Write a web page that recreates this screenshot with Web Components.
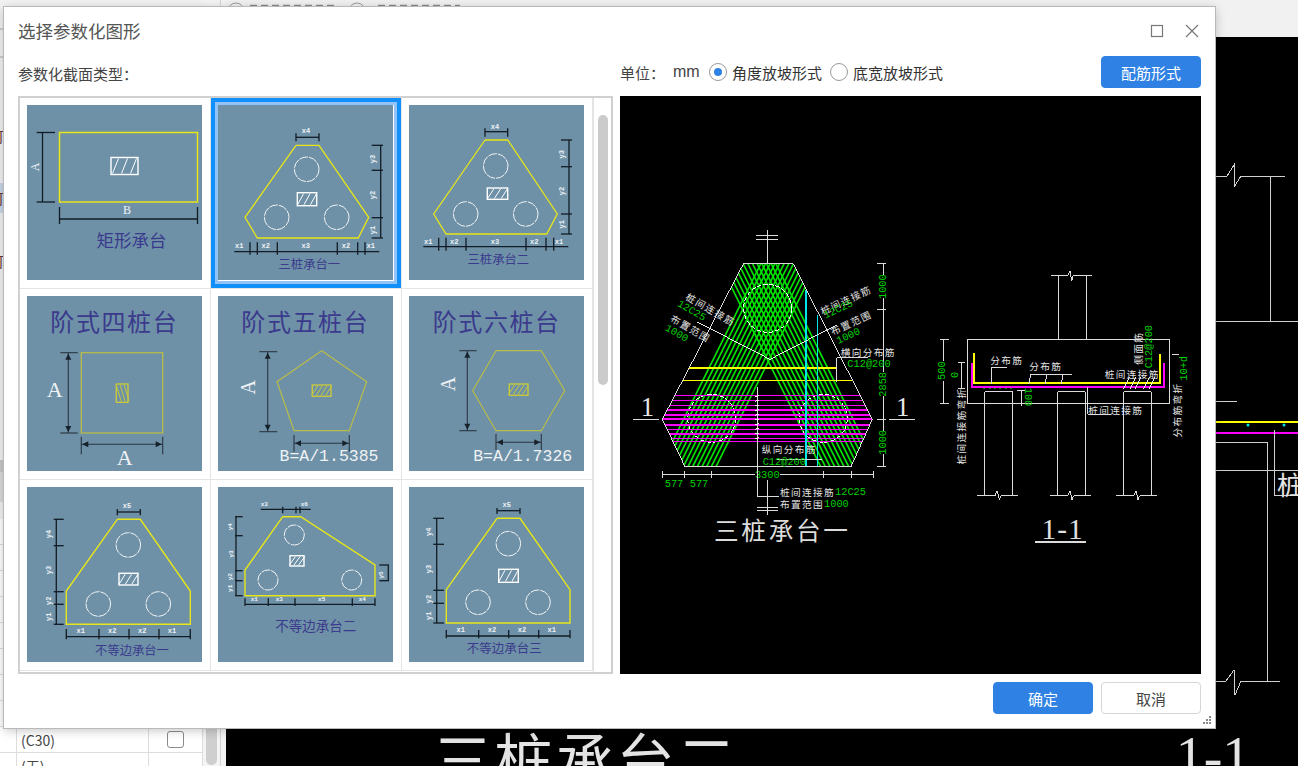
<!DOCTYPE html>
<html lang="zh">
<head>
<meta charset="utf-8">
<title>选择参数化图形</title>
<style>
  html, body { margin: 0; height: 100%; overflow: hidden; background: #f0f0f0; }
  body { font-family: "Noto Sans CJK SC", "Liberation Sans", sans-serif; color: #333; }
</style>
</head>
<body>
<app-backdrop>
  <param-dialog heading="选择参数化图形"></param-dialog>
</app-backdrop>

<script>
// shared svg helpers
const CJK = '"Noto Sans CJK SC", "Liberation Sans", sans-serif';
const MONO = '"Liberation Mono", monospace';
const SERIF = '"Liberation Serif", serif';

function line(x1, y1, x2, y2, stroke, w = 1) {
  return `<line x1="${x1}" y1="${y1}" x2="${x2}" y2="${y2}" stroke="${stroke}" stroke-width="${w}"/>`;
}
function poly(pts, stroke, w = 1, fill = 'none') {
  return `<polyline points="${pts.map(p => p.join(',')).join(' ')}" stroke="${stroke}" stroke-width="${w}" fill="${fill}"/>`;
}
function label(x, y, s, o = {}) {
  const { size = 7, fill = '#eef2f4', rot = 0, family = MONO, weight = 'normal', anchor = 'middle', spacing = 0 } = o;
  const tr = rot ? ` transform="rotate(${rot} ${x} ${y})"` : '';
  return `<text x="${x}" y="${y}" font-size="${size}" fill="${fill}" font-family='${family}' font-weight="${weight}" text-anchor="${anchor}" dominant-baseline="central" letter-spacing="${spacing}"${tr}>${s}</text>`;
}
// dimension names inside the thumbnails
function dl(x, y, s, o = {}) {
  return label(x, y, s, { weight: 'bold', ...o });
}

// thumbnails: coordinates are px inside the 175x175 picture
const DARK = '#111c24';
const YEL = '#e6e618';
const OLIVE = '#b8bc48';
const INK = '#3b3a8c';

function dimH(y, ticks, t0, t1, from, to, c = DARK) {
  const a = from ?? ticks[0], b = to ?? ticks[ticks.length - 1];
  return line(a, y, b, y, c, 1.3) + ticks.map(x => line(x, t0, x, t1, c, 1.3)).join('');
}
function dimV(x, ticks, t0, t1, c = DARK) {
  return line(x, ticks[0], x, ticks[ticks.length - 1], c, 1.3) + ticks.map(y => line(t0, y, t1, y, c, 1.3)).join('');
}
function hatch(x, y, w, h, c = '#fff', n = 3, flip = false) {
  let out = `<rect x="${x}" y="${y}" width="${w}" height="${h}" fill="none" stroke="${c}" stroke-width="1.4"/>`;
  for (let i = 0; i < n; i++) {
    const px = x + (w / n) * (i + 0.5);
    out += flip
      ? line(px - 2, y + 1, px + 3, y + h - 1, c, 1)
      : line(px + 3, y + 1, px - 3, y + h - 1, c, 1);
  }
  return out;
}
function piles(list, r = 12.3) {
  return list.map(([x, y]) =>
    `<circle cx="${x}" cy="${y}" r="${r}" fill="none" stroke="#f2f4f5" stroke-width="1" stroke-dasharray="9 1"/>`).join('');
}
function arrowV(x, y1, y2, t0, t1) {
  const c = '#2a3640';
  return line(x, y1, x, y2, c, 1.1) + line(t0, y1, t1, y1, c, 1.1) + line(t0, y2, t1, y2, c, 1.1) +
    `<path d="M${x} ${y1 + 1}l-3 6h6zM${x} ${y2 - 1}l-3 -6h6z" fill="#17212a"/>`;
}
function arrowH(y, x1, x2, t0, t1) {
  const c = '#2a3640';
  return line(x1, y, x2, y, c, 1.1) + line(x1, t0, x1, t1, c, 1.1) + line(x2, t0, x2, t1, c, 1.1) +
    `<path d="M${x1 + 1} ${y}l6 -3v6zM${x2 - 1} ${y}l-6 -3v6z" fill="#17212a"/>`;
}
const closed = pts => pts.concat([pts[0]]);

const THUMBS = {
  rect: () =>
    `<rect x="32.5" y="27.5" width="138" height="69.5" fill="none" stroke="${YEL}" stroke-width="1.5"/>` +
    hatch(84, 52.5, 27, 17) +
    dimV(15.5, [27.5, 97], 9.7, 28) +
    label(7.5, 62, 'A', { size: 12, rot: -90, family: SERIF }) +
    dimH(114, [32.5, 170.5], 102, 119) +
    label(100, 105, 'B', { size: 12, family: SERIF }) +
    label(104.5, 134, '矩形承台', { size: 17.5, fill: INK, family: CJK }),

  tri1: () =>
    poly(closed([[78, 40.3], [101, 40.3], [150.7, 112.3], [140.3, 133], [39.3, 133], [27, 112.3]]), YEL, 1.3) +
    piles([[88.7, 64.3], [58.7, 112.3], [118.7, 112.3]]) +
    hatch(79.3, 87.7, 19.4, 13) +
    dimH(32.3, [78, 101], 28.3, 36.3) + dl(88, 25.7, 'x4') +
    dimV(162.7, [40.3, 65.3, 112.7, 133], 153.7, 165) +
    dl(154.7, 54, 'y3', { rot: -90 }) + dl(154.7, 90, 'y2', { rot: -90 }) + dl(154.7, 125, 'y1', { rot: -90 }) +
    dimH(146.7, [32, 39.3, 59.3, 119.3, 139.7, 147], 137.3, 149.7, 16.3, 161.3) +
    dl(21.3, 141, 'x1') + dl(47.7, 141, 'x2') + dl(87.7, 141, 'x3') + dl(128, 141, 'x2') + dl(152.7, 141, 'x1') +
    label(91.3, 158.8, '三桩承台一', { size: 12.3, fill: INK, family: CJK }),

  tri2: () =>
    poly(closed([[76, 35], [98.7, 35], [148.3, 109], [137.7, 129], [37, 129], [24.7, 109]]), YEL, 1.3) +
    piles([[86.7, 61], [56.7, 109], [116.7, 109]]) +
    hatch(78.3, 83, 20.4, 11.3) +
    dimH(26.7, [76, 98.7], 23.3, 31.7) + dl(86, 22, 'x4') +
    dimV(160, [35, 61.7, 109, 129], 152, 163) +
    dl(152.7, 49.3, 'y3', { rot: -90 }) + dl(152.7, 86, 'y2', { rot: -90 }) + dl(152.7, 119.3, 'y1', { rot: -90 }) +
    dimH(141.7, [29.7, 37, 57, 117, 137, 144.7], 132.7, 145.7, 14.3, 159.3) +
    dl(19.3, 137, 'x1') + dl(45.3, 137, 'x2') + dl(86, 137, 'x3') + dl(125.3, 137, 'x2') + dl(150, 137, 'x1') +
    label(89.3, 153.8, '三桩承台二', { size: 12.3, fill: INK, family: CJK }),

  step4: () =>
    label(87.3, 24.8, '阶式四桩台', { size: 24, fill: INK, family: CJK, spacing: 1.6 }) +
    `<rect x="54.3" y="56.7" width="81.4" height="80.3" fill="none" stroke="${OLIVE}" stroke-width="1.3"/>` +
    hatch(89.3, 88, 11.7, 18.3, '#c8c83c', 3, true) +
    arrowV(41.3, 56.7, 137, 33.3, 50.7) +
    label(27.7, 93.3, 'A', { size: 22, family: SERIF }) +
    arrowH(148.3, 54.3, 135.7, 140.7, 158.3) +
    label(97.7, 161.5, 'A', { size: 22, family: SERIF }),

  step5: () =>
    label(87.3, 24.8, '阶式五桩台', { size: 24, fill: INK, family: CJK, spacing: 1.6 }) +
    poly(closed([[103.7, 54.7], [148.7, 85.7], [131.3, 134.7], [76, 134.7], [59, 85.7]]), OLIVE, 1.2) +
    hatch(94.3, 89, 18.7, 11.3, '#c8c83c', 4) +
    arrowV(49.7, 55.7, 135.7, 41.3, 59.3) +
    label(30.3, 91.3, 'A', { size: 20, rot: -90, family: SERIF }) +
    arrowH(147.3, 76, 131.3, 139, 155.7) +
    label(111, 160.7, 'B=A/1.5385', { size: 16.5 }),

  step6: () =>
    label(87.7, 24.8, '阶式六桩台', { size: 24, fill: INK, family: CJK, spacing: 1.6 }) +
    poly(closed([[87, 54.7], [132.3, 54.7], [155.7, 94.7], [132.3, 134.7], [87, 134.7], [63.7, 94.7]]), OLIVE, 1.2) +
    hatch(100.3, 88, 18.7, 11.3, '#c8c83c', 4) +
    arrowV(58.3, 54.7, 134.7, 50.3, 67.7) +
    label(39.3, 88, 'A', { size: 20, rot: -90, family: SERIF }) +
    arrowH(146.3, 87, 132.3, 138, 154) +
    label(113.7, 160.7, 'B=A/1.7326', { size: 16.5 }),

  uneq1: () =>
    poly(closed([[90.3, 32.3], [113.3, 32.3], [163.3, 104], [163.3, 137.3], [39.3, 137.3], [39.3, 104]]), YEL, 1.4) +
    piles([[101.3, 58], [71.3, 117], [131.3, 117]]) +
    hatch(92, 86.3, 19, 11.7) +
    dimH(25, [90.3, 113.3], 22, 28.3) + dl(100, 19, 'x5') +
    dimV(29.3, [32.3, 58.7, 104.7, 117.3, 137.3], 26.7, 36.7) +
    dl(22, 47, 'y4', { rot: -90 }) + dl(22, 83, 'y3', { rot: -90 }) + dl(22, 113.7, 'y2', { rot: -90 }) + dl(22, 129.7, 'y1', { rot: -90 }) +
    dimH(149.7, [39.3, 72, 102, 132, 163.3], 142, 152.3) +
    dl(53.7, 144, 'x1') + dl(85.3, 144, 'x2') + dl(115.3, 144, 'x2') + dl(145, 144, 'x1') +
    label(105, 162.5, '不等边承台一', { size: 12.3, fill: INK, family: CJK }),

  uneq2: () =>
    poly(closed([[64.7, 29.7], [82.7, 29.7], [157, 78], [157, 108.7], [27, 108.7], [27, 83]]), YEL, 1.4) +
    piles([[76.3, 48], [50, 93], [133.7, 93]], 10) +
    hatch(72, 68.7, 14, 10.3) +
    dimH(22.3, [64.7, 78, 82], 19.7, 26.3, 42.7, 92.7) + dl(46.3, 17, 'x3', { size: 6 }) + dl(86.3, 17, 'x6', { size: 6 }) +
    dimV(18, [29.7, 48.7, 83.7, 93.7, 108.7], 17, 24.7) +
    dl(13, 39.7, 'y4', { size: 6, rot: -90 }) + dl(13, 67, 'y3', { size: 6, rot: -90 }) + dl(13, 89.7, 'y2', { size: 6, rot: -90 }) + dl(13, 101.3, 'y1', { size: 6, rot: -90 }) +
    dimV(170.3, [78, 93.7], 161.3, 171) + dl(163.7, 88, 'y5', { size: 6, rot: -90 }) +
    dimH(117.3, [27, 50.3, 77, 134.3, 157], 111.3, 119) +
    dl(36.3, 112.3, 'x1', { size: 6 }) + dl(61.3, 112.3, 'x3', { size: 6 }) + dl(103.7, 112.3, 'x5', { size: 6 }) + dl(144.3, 112.3, 'x4', { size: 6 }) +
    label(97.7, 138, '不等边承台二', { size: 13.5, fill: INK, family: CJK }),

  uneq3: () =>
    poly(closed([[88, 31.3], [111, 31.3], [161, 102.7], [161, 136], [37.3, 136], [37.3, 102.7]]), YEL, 1.4) +
    piles([[99.3, 56.7], [69, 115.3], [129, 115.3]]) +
    hatch(89.7, 82.3, 19.6, 13) +
    dimH(23.7, [88, 111], 21, 27) + dl(97.7, 18, 'x5') +
    dimV(27.7, [31.3, 57.3, 103.3, 116.3, 136], 24.3, 35) +
    dl(20, 44.7, 'y4', { rot: -90 }) + dl(20, 82, 'y3', { rot: -90 }) + dl(20, 112, 'y2', { rot: -90 }) + dl(20, 128.7, 'y1', { rot: -90 }) +
    dimH(149, [37.3, 69.7, 99.7, 129.7, 161], 143, 151.3) +
    dl(51.7, 143, 'x1') + dl(83, 143, 'x2') + dl(113, 143, 'x2') + dl(142.7, 143, 'x1') +
    label(95.3, 160.8, '不等边承台三', { size: 12.5, fill: INK, family: CJK }),
};

class CadThumb extends HTMLElement {
  connectedCallback() {
    const root = this.shadowRoot || this.attachShadow({ mode: 'open' });
    const kind = this.getAttribute('kind');
    root.innerHTML = `
      <style>
        :host { display: block; width: 175px; height: 175px; background: #6e91a8; }
        svg { display: block; }
      </style>
      <svg width="175" height="175" viewBox="0 0 175 175">${THUMBS[kind]()}</svg>
    `;
  }
}
customElements.define('cad-thumb', CadThumb);

class ThumbGrid extends HTMLElement {
  constructor() {
    super();
    this.attachShadow({ mode: 'open' });
    const kinds = ['rect', 'tri1', 'tri2', 'step4', 'step5', 'step6', 'uneq1', 'uneq2', 'uneq3'];
    this.shadowRoot.innerHTML = `
      <style>
        :host {
          display: flex;
          width: 595px;
          height: 578px;
          box-sizing: border-box;
          border: 2px solid #d0d0d0;
          background: #fff;
        }
        .cells {
          display: grid;
          grid-template-columns: repeat(3, 191px);
          grid-auto-rows: 191px;
        }
        .cell {
          box-sizing: border-box;
          padding: 7px 0 0 7px;
          border-right: 1px solid #e4e4e4;
          border-bottom: 1px solid #e4e4e4;
        }
        .cell.selected {
          box-shadow: inset 0 0 0 4px #1190fb, inset 0 0 0 7px #92c3f6;
        }
        .track {
          flex: 1;
          display: flex;
          justify-content: center;
          padding-top: 17px;
          border-left: 1px solid #e4e4e4;
        }
        .bar { width: 10px; height: 270px; border-radius: 5px; background: #cbcbcb; }
      </style>
      <div class="cells">
        ${kinds.map(k => `<div class="cell${k === 'tri1' ? ' selected' : ''}"><cad-thumb kind="${k}"></cad-thumb></div>`).join('')}
      </div>
      <div class="track"><div class="bar"></div></div>
    `;
  }
}
customElements.define('thumb-grid', ThumbGrid);

// the big preview: both groups keep the coords read off the 3x crops
function planDrawing() {
  const outline = [[370, 132], [520, 132], [757, 598], [693, 740], [195, 740], [127, 598]];
  let bars = '';
  for (let i = 0; i <= 170; i += 14) {
    bars += line(120 + i, 740, 422 + i, 132, '#00e400', 5);
    bars += line(770 - i, 740, 468 - i, 132, '#00e400', 5);
  }
  let mag = '';
  [527, 542, 557, 570, 585, 597, 615, 628, 642, 655, 665].forEach(y => { mag += line(120, y, 770, y, '#ff00ff', 4); });
  let ticks = '';
  for (let y = 530; y <= 665; y += 14) ticks += line(404, y, 418, y - 3, '#eee', 3);
  const W = '#dcdcdc', G = '#00d000';
  const cn = { size: 29, fill: '#e4e4e4', family: CJK, spacing: 4 };
  const gr = { size: 31, fill: G, family: MONO };
  return `
    <defs><clipPath id="hexclip"><polygon points="${outline.map(p => p.join(',')).join(' ')}"/></clipPath></defs>
    <g clip-path="url(#hexclip)" shape-rendering="geometricPrecision">${bars}</g>
    ${piles([[443, 265], [275, 595], [610, 595]], 72).replace(/stroke-width="1"/g, 'stroke-width="3"').replace(/9 1/g, '14 5')}
    <g clip-path="url(#hexclip)">${mag}</g>
    ${line(207, 444, 650, 444, '#ffff00', 4)}${line(190, 482, 697, 482, '#ffff00', 4)}
    ${line(558, 210, 558, 740, '#00e6e6', 4)}${line(593, 285, 593, 740, '#00e6e6', 4)}
    ${poly(closed(outline), W, 3)}
    ${poly([[230, 305], [450, 418], [650, 315]], '#e8e8e8', 3)}
    ${line(443, 30, 443, 132, W, 3)}${line(408, 48, 475, 48, W, 3)}${line(408, 58, 475, 58, W, 3)}
    ${line(443, 780, 443, 885, W, 3)}${line(412, 862, 475, 862, W, 3)}${line(412, 872, 475, 872, W, 3)}
    ${line(40, 598, 118, 598, W, 3)}${line(808, 598, 885, 598, W, 3)}
    ${label(82, 562, '1', { size: 80, fill: '#e8e8e8', family: SERIF })}
    ${label(848, 562, '1', { size: 80, fill: '#e8e8e8', family: SERIF })}
    ${line(790, 132, 790, 740, W, 3)}
    ${[132, 268, 598, 740].map(y => line(772, y, 797, y, W, 3)).join('')}
    <rect x="775" y="165" width="30" height="70" fill="#000"/>
    <rect x="775" y="457" width="30" height="72" fill="#000"/>
    <rect x="775" y="632" width="30" height="70" fill="#000"/>
    ${label(789, 200, '1000', { ...gr, rot: -90 })}${label(789, 493, '2858', { ...gr, rot: -90 })}${label(789, 667, '1000', { ...gr, rot: -90 })}
    ${line(127, 763, 762, 763, W, 3)}
    ${[127, 195, 275, 612, 695, 762].map(x => line(x, 752, x, 775, W, 3)).join('')}
    <rect x="405" y="752" width="76" height="26" fill="#000"/>
    ${label(442, 766, '3300', gr)}${label(162, 792, '577', gr)}${label(237, 792, '577', gr)}
    ${label(272, 268, '桩间连接筋', { ...cn, rot: 30 })}
    ${label(215, 272, '12C25', { ...gr, rot: 30 })}
    ${label(212, 325, '布置范围', { ...cn, rot: 30 })}
    ${label(170, 340, '1000', { ...gr, rot: 30 })}
    ${label(678, 240, '桩间连接筋', { ...cn, rot: -25 })}
    ${label(655, 268, '12C25', { ...gr, rot: -25 })}
    ${label(693, 308, '布置范围', { ...cn, rot: -25 })}
    ${label(685, 348, '1000', { ...gr, rot: -25 })}
    ${poly([[745, 414], [650, 414], [650, 485]], W, 3)}
    ${label(745, 396, '横向分布筋', cn)}${label(747, 432, 'C12@200', gr)}
    ${line(413, 502, 413, 830, W, 3)}${line(413, 830, 478, 830, W, 3)}${ticks}
    ${line(470, 718, 605, 718, W, 3)}
    ${label(508, 688, '纵向分布筋', cn)}${label(493, 726, 'C12@200', gr)}
    ${label(480, 815, '桩间连接筋', { ...cn, anchor: 'start' })}${label(645, 815, '12C25', { ...gr, anchor: 'start' })}
    ${label(480, 852, '布置范围', { ...cn, anchor: 'start' })}${label(612, 852, '1000', { ...gr, anchor: 'start' })}
    ${label(487, 928, '三桩承台一', { size: 74, fill: '#dcdcdc', family: CJK, spacing: 8 })}
  `;
}

function pileLeg(x) {
  const W = '#dcdcdc';
  return poly([[x, 707], [x, 395], [x + 83, 395], [x + 83, 707]], W, 3) +
    poly([[x - 23, 707], [x + 30, 707], [x + 37, 692], [x + 43, 720], [x + 48, 707], [x + 100, 707]], W, 3);
}

function sectionDrawing() {
  const W = '#dcdcdc', G = '#00d000';
  const cn = { size: 29, fill: '#e4e4e4', family: CJK, spacing: 4 };
  const gr = { size: 31, fill: G, family: MONO };
  let ties = '';
  [620, 640, 655, 680, 697].forEach(x => { ties += line(x - 10, 388, x + 8, 352, '#eee', 3); });
  let dots = '';
  for (let x = 190; x < 280; x += 16) dots += line(x, 385, x + 6, 385, '#00d000', 2);
  return `
    ${line(417, 46, 417, 238, W, 3)}${line(500, 46, 500, 238, W, 3)}
    ${poly([[393, 46], [443, 46], [450, 32], [455, 62], [460, 46], [516, 46]], W, 3)}
    <rect x="143" y="238" width="605" height="194" fill="none" stroke="${W}" stroke-width="3"/>
    ${pileLeg(195)}${pileLeg(413)}${pileLeg(611)}
    ${poly([[156, 308], [156, 381], [731, 381], [731, 308]], '#ff00ff', 6)}
    ${poly([[163, 278], [163, 368], [720, 368], [720, 282]], '#ffff00', 6)}
    ${dots}${ties}
    ${line(70, 238, 70, 432, W, 3)}${line(60, 238, 88, 238, W, 3)}${line(60, 432, 88, 432, W, 3)}
    <rect x="52" y="302" width="32" height="62" fill="#000"/>
    ${label(66, 332, '500', { ...gr, rot: -90 })}${label(105, 345, '0', { ...gr, rot: -90 })}
    ${line(125, 308, 125, 385, W, 3)}${line(115, 308, 135, 308, W, 3)}${line(115, 385, 135, 385, W, 3)}
    ${label(122, 498, '桩间连接筋弯折', { ...cn, rot: -90 })}
    ${poly([[260, 322], [215, 322], [215, 372]], W, 3)}${label(260, 300, '分布筋', cn)}
    ${line(333, 343, 455, 343, W, 3)}${line(333, 343, 326, 372, W, 3)}${line(380, 345, 375, 372, W, 3)}${line(429, 345, 424, 372, W, 3)}
    ${label(377, 318, '分布筋', cn)}
    ${line(306, 393, 306, 437, W, 3)}${line(290, 393, 314, 393, W, 3)}
    ${label(325, 411, '100', { ...gr, rot: 90 })}
    ${label(637, 341, '桩间连接筋', cn)}
    ${poly([[503, 380], [503, 463], [572, 463]], W, 3)}
    ${label(587, 450, '桩间连接筋', cn)}
    ${label(655, 265, '侧面筋', { ...cn, rot: -90 })}
    ${label(686, 260, 'C12@200', { ...gr, rot: -90 })}
    ${label(792, 325, '10+d', { ...gr, rot: -90 })}
    ${line(755, 283, 778, 283, W, 3)}
    ${label(770, 450, '分布筋弯折', { ...cn, rot: -90 })}
    ${label(428, 806, '1-1', { size: 88, fill: '#e0e0e0', family: SERIF, spacing: 3 })}
    ${line(345, 846, 497, 846, W, 4)}
  `;
}

class CadPreview extends HTMLElement {
  constructor() {
    super();
    this.attachShadow({ mode: 'open' });
    this.shadowRoot.innerHTML = `
      <style>
        :host { display: block; width: 581px; height: 578px; background: #000; }
        svg { display: block; shape-rendering: crispEdges; }
      </style>
      <svg width="581" height="578" viewBox="620 96 581 578">
        <g transform="translate(620 220) scale(.33333)">${planDrawing()}</g>
        <g transform="translate(920 260) scale(.33333)">${sectionDrawing()}</g>
      </svg>
    `;
  }
}
customElements.define('cad-preview', CadPreview);

class UiButton extends HTMLElement {
  constructor() {
    super();
    this.attachShadow({ mode: 'open' });
    this.shadowRoot.innerHTML = `
      <style>
        :host {
          display: flex;
          align-items: center;
          justify-content: center;
          width: 100px;
          height: 32px;
          box-sizing: border-box;
          border-radius: 4px;
          border: 1px solid #d6d6d6;
          background: #fff;
          color: #444;
          font-size: 15px;
        }
        :host([primary]) { background: #2f82e4; border-color: #2f82e4; color: #fff; }
      </style>
      <slot></slot>
    `;
  }
}
customElements.define('ui-button', UiButton);

class UiRadio extends HTMLElement {
  constructor() {
    super();
    this.attachShadow({ mode: 'open' });
    this.shadowRoot.innerHTML = `
      <style>
        :host { display: inline-flex; align-items: center; gap: 5px; font-size: 15px; color: #333; }
        .ring {
          width: 18px;
          height: 18px;
          box-sizing: border-box;
          border: 1px solid #9a9a9a;
          border-radius: 50%;
          display: flex;
          align-items: center;
          justify-content: center;
        }
        :host([checked]) .ring::after {
          content: '';
          width: 8px;
          height: 8px;
          border-radius: 50%;
          background: #2f82e4;
        }
      </style>
      <span class="ring"></span><slot></slot>
    `;
  }
}
customElements.define('ui-radio', UiRadio);

class ParamDialog extends HTMLElement {
  constructor() {
    super();
    this.attachShadow({ mode: 'open' });
    this.shadowRoot.innerHTML = `
      <style>
        :host {
          position: absolute;
          left: 4px;
          top: 7px;
          width: 1211px;
          height: 721px;
          box-sizing: border-box;
          padding: 0 14px;
          display: flex;
          flex-direction: column;
          background: #fff;
          box-shadow: 0 0 0 1px #b9b9b9, 0 2px 10px rgba(0, 0, 0, .25);
        }
        .title {
          height: 49px;
          flex: none;
          display: flex;
          align-items: center;
          justify-content: space-between;
          box-sizing: border-box;
          padding: 0 1px 1px 0;
          font-size: 17.5px;
          color: #555;
        }
        .title span { position: relative; top: -1px; }
        .title svg { display: block; }
        .tools, .body { display: flex; gap: 7px; }
        .tools { height: 32px; flex: none; align-items: center; font-size: 15px; color: #444; }
        .tools .left { width: 595px; position: relative; top: 1px; }
        .tools .right { flex: 1; display: flex; align-items: center; }
        .unit { width: 53px; }
        .mm { width: 36px; font-family: "Liberation Sans", sans-serif; font-size: 16px; }
        .tools ui-radio { margin-right: 8px; }
        .tools ui-button { margin-left: auto; }
        .body { margin-top: 8px; flex: none; }
        .foot { margin-top: 8px; display: flex; justify-content: flex-end; gap: 8px; }
        .grip { position: absolute; right: 3px; bottom: 3px; display: block; }
      </style>
      <div class="title">
        <span>${this.getAttribute('heading')}</span>
        <svg width="50" height="16" viewBox="0 0 50 16" fill="none" stroke="#777" stroke-width="1.2">
          <rect x="1.5" y="2.5" width="11" height="11"/>
          <path d="M36 2l12 12M48 2L36 14"/>
        </svg>
      </div>
      <div class="tools">
        <div class="left">参数化截面类型：</div>
        <div class="right">
          <span class="unit">单位：</span><span class="mm">mm</span>
          <ui-radio checked>角度放坡形式</ui-radio>
          <ui-radio>底宽放坡形式</ui-radio>
          <ui-button primary>配筋形式</ui-button>
        </div>
      </div>
      <div class="body">
        <thumb-grid></thumb-grid>
        <cad-preview></cad-preview>
      </div>
      <div class="foot">
        <ui-button primary>确定</ui-button>
        <ui-button>取消</ui-button>
      </div>
      <svg class="grip" width="9" height="9" viewBox="0 0 9 9" fill="#8a8a8a">
        <rect x="6" y="0" width="2" height="2"/>
        <rect x="3" y="3" width="2" height="2"/><rect x="6" y="3" width="2" height="2"/>
        <rect x="0" y="6" width="2" height="2"/><rect x="3" y="6" width="2" height="2"/><rect x="6" y="6" width="2" height="2"/>
      </svg>
    `;
  }
}
customElements.define('param-dialog', ParamDialog);

class SideTable extends HTMLElement {
  constructor() {
    super();
    this.attachShadow({ mode: 'open' });
    const bands = [
      { h: 30, line: 1 }, { h: 28, line: 1 }, { h: 62 },
      { h: 31, t: '可' }, { h: 32, t: '0' }, { h: 30, t: '可', on: 1 }, { h: 33, t: '：' }, { h: 30, t: '可' },
      { h: 184 }, { h: 12, gray: 1 }, { h: 30, gray2: 1 }, { h: 17 },
    ];
    let rows = bands.map(b => {
      const cls = `${b.line ? 'ruled ' : ''}${b.on ? 'on ' : ''}${b.gray ? 'gray ' : ''}${b.gray2 ? 'gray2' : ''}`;
      return `<div class="band ${cls}" style="height:${b.h}px">${b.t ? `<span class="sliver">${b.t}</span>` : ''}</div>`;
    }).join('');
    for (let i = 0; i < 8; i++) rows += '<div class="row"><i></i><i></i><i></i></div>';
    rows += '<div class="row"><i></i><i>(C30)</i><i><b></b></i></div>';
    rows += '<div class="row"><i></i><i>(无)</i><i></i></div>';
    this.shadowRoot.innerHTML = `
      <style>
        :host {
          display: flex;
          width: 226px;
          height: 766px;
          flex: none;
          overflow: hidden;
          box-sizing: border-box;
          background: #f4f4f4;
          font-size: 14px;
          color: #444;
        }
        .list { width: 203px; background: #fff; overflow: hidden; }
        .band { box-sizing: border-box; display: flex; align-items: center; background: #f2f2f2; }
        .ruled { border-bottom: 2px solid #ccc; }
        .on { background: #c9d8ea; }
        .gray { background: #c8c8c8; }
        .gray2 { background: #dcdcdc; }
        .sliver { margin-left: -10px; color: #6b3a30; width: 14px; font-size: 14px; }
        .row { height: 26px; box-sizing: border-box; display: flex; border-bottom: 1px solid #ddd; background: #fff; }
        .row i { font-style: normal; display: flex; align-items: center; border-right: 1px solid #ddd; box-sizing: border-box; }
        .row i:nth-child(1) { width: 17px; }
        .row i:nth-child(2) { width: 132px; padding-left: 4px; }
        .row i:nth-child(3) { width: 54px; justify-content: center; }
        b { width: 17px; height: 17px; box-sizing: border-box; border: 1px solid #8c8c8c; border-radius: 3px; background: #fff; }
        .scroll { margin-left: 3px; width: 11px; position: relative; }
        .scroll::after {
          content: '';
          position: absolute;
          left: 0;
          right: 0;
          top: 700px;
          height: 65px;
          border-radius: 6px;
          background: #cfcfcf;
        }
        .rule { margin-left: 3px; width: 1px; background: #d4d4d4; }
      </style>
      <div class="list">${rows}</div>
      <div class="scroll"></div>
      <div class="rule"></div>
    `;
  }
}
customElements.define('side-table', SideTable);

class AppBackdrop extends HTMLElement {
  constructor() {
    super();
    this.attachShadow({ mode: 'open' });
    const W = '#d0d0d0';
    this.shadowRoot.innerHTML = `
      <style>
        :host { display: flex; width: 1298px; height: 766px; overflow: hidden; position: relative; background: #f0f0f0; }
        .main { flex: 1; display: flex; flex-direction: column; min-width: 0; }
        .top { height: 37px; flex: none; box-sizing: border-box; background: #f1f1f1; }
        .top svg, .canvas svg { display: block; }
        .canvas { flex: 1; background: #000; overflow: hidden; }
        .canvas svg line, .canvas svg polyline { shape-rendering: crispEdges; }
      </style>
      <side-table></side-table>
      <div class="main">
        <div class="top">
          <svg width="1072" height="37" viewBox="226 0 1072 37" fill="none" stroke="#9a9a9a">
            <circle cx="236" cy="11" r="8"/><circle cx="357" cy="11" r="8"/>
            <path d="M250 5.5h85M378 5.5h82" stroke="#8a8a8a" stroke-dasharray="7 4" stroke-width="1.5"/>
          </svg>
        </div>
        <div class="canvas">
          <svg width="1072" height="729" viewBox="226 37 1072 729">
            ${poly([[1216, 176], [1227, 176], [1234, 165], [1234, 187], [1241, 176], [1285, 176]], W)}
            ${line(1270, 176, 1270, 321, W)}${line(1216, 321, 1298, 321, W)}
            ${line(1216, 401, 1237, 401, W)}
            ${line(1216, 422, 1298, 422, '#ffff00', 2)}${line(1216, 433, 1298, 433, '#ff00ff', 2)}
            <circle cx="1248" cy="425" r="1.5" fill="#00e6e6"/><circle cx="1284" cy="425" r="1.5" fill="#00e6e6"/>
            ${poly([[1274, 430], [1274, 495], [1298, 495]], W)}
            ${poly([[1216, 442], [1267, 442], [1267, 681]], W)}
            ${line(1216, 470, 1298, 470, W)}
            ${poly([[1216, 681], [1226, 681], [1234, 670], [1235, 695], [1241, 681], [1280, 681]], W)}
            ${label(1290, 483, '桩', { size: 26, fill: '#e4e4e4', family: CJK })}
            ${label(586, 757, '三桩承台二', { size: 58, fill: '#e4e4e4', family: CJK, spacing: 3 })}
            ${label(1213, 757, '1-1', { size: 56, fill: '#e4e4e4', family: SERIF })}
          </svg>
        </div>
      </div>
      <slot></slot>
    `;
  }
}
customElements.define('app-backdrop', AppBackdrop);
</script>
</body>
</html>
